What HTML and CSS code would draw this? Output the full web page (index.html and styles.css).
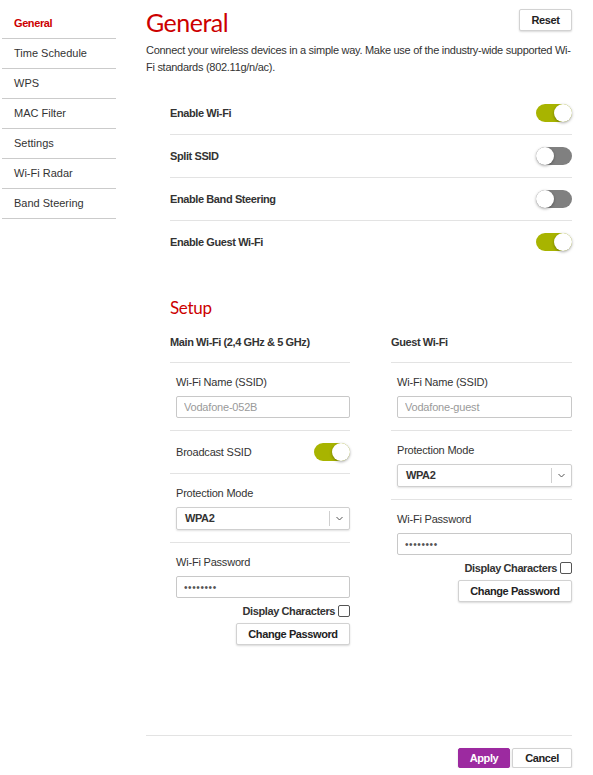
FILE: index.html
```html
<!DOCTYPE html>
<html lang="en">
<head>
    <meta charset="UTF-8">
    <meta name="viewport" content="width=device-width, initial-scale=1.0">
    <title>Wi-Fi General</title>
    <link rel="stylesheet" href="styles.css">
</head>
<body>
<div class="page">
    <nav class="sidebar">
        <a class="nav-item active" href="#">General</a>
        <a class="nav-item" href="#">Time Schedule</a>
        <a class="nav-item" href="#">WPS</a>
        <a class="nav-item" href="#">MAC Filter</a>
        <a class="nav-item" href="#">Settings</a>
        <a class="nav-item" href="#">Wi-Fi Radar</a>
        <a class="nav-item" href="#">Band Steering</a>
    </nav>

    <main class="content">
        <div class="head">
            <h1>General</h1>
            <button class="btn reset">Reset</button>
        </div>
        <p class="intro">Connect your wireless devices in a simple way. Make use of the industry-wide supported Wi-Fi standards (802.11g/n/ac).</p>

        <div class="switches">
            <div class="switch-row"><span>Enable Wi-Fi</span><span class="toggle on"></span></div>
            <div class="switch-row"><span>Split SSID</span><span class="toggle"></span></div>
            <div class="switch-row"><span>Enable Band Steering</span><span class="toggle"></span></div>
            <div class="switch-row"><span>Enable Guest Wi-Fi</span><span class="toggle on"></span></div>
        </div>

        <h2>Setup</h2>
        <div class="setup">
            <section class="col">
                <h3 class="col-head">Main Wi-Fi (2,4 GHz &amp; 5 GHz)</h3>
                <div class="field">
                    <label>Wi-Fi Name (SSID)</label>
                    <input class="text-input" type="text" placeholder="Vodafone-052B">
                </div>
                <div class="field-inline">
                    <span>Broadcast SSID</span><span class="toggle on"></span>
                </div>
                <div class="field">
                    <label>Protection Mode</label>
                    <div class="select">
                        <span class="select-value">WPA2</span>
                        <span class="select-arrow"><svg width="7" height="5" viewBox="0 0 7 5"><path d="M0.5 1 L3.5 4 L6.5 1" fill="none" stroke="#555" stroke-width="1"/></svg></span>
                    </div>
                </div>
                <div class="field last">
                    <label>Wi-Fi Password</label>
                    <input class="text-input pass" type="password" value="12345678">
                    <div class="show-row"><span>Display Characters</span><span class="check"></span></div>
                    <div class="btn-row"><button class="btn wide">Change Password</button></div>
                </div>
            </section>

            <section class="col">
                <h3 class="col-head">Guest Wi-Fi</h3>
                <div class="field">
                    <label>Wi-Fi Name (SSID)</label>
                    <input class="text-input" type="text" placeholder="Vodafone-guest">
                </div>
                <div class="field">
                    <label>Protection Mode</label>
                    <div class="select">
                        <span class="select-value">WPA2</span>
                        <span class="select-arrow"><svg width="7" height="5" viewBox="0 0 7 5"><path d="M0.5 1 L3.5 4 L6.5 1" fill="none" stroke="#555" stroke-width="1"/></svg></span>
                    </div>
                </div>
                <div class="field last">
                    <label>Wi-Fi Password</label>
                    <input class="text-input pass" type="password" value="12345678">
                    <div class="show-row"><span>Display Characters</span><span class="check"></span></div>
                    <div class="btn-row"><button class="btn wide">Change Password</button></div>
                </div>
            </section>
        </div>

        <div class="footer">
            <button class="btn apply">Apply</button>
            <button class="btn cancel">Cancel</button>
        </div>
    </main>
</div>
</body>
</html>
```

FILE: styles.css
```css
* {
    box-sizing: border-box;
}
body {
    margin: 0;
    font-family: "Liberation Sans", Arial, sans-serif;
    font-size: 11px;
    letter-spacing: -0.2px;
    color: #333;
    background: #fff;
}
b, .nav-item.active, .switch-row, .col-head, .show-row, .btn, .select-value {
    letter-spacing: -0.4px;
}
.page {
    display: flex;
    align-items: flex-start;
}

/* left menu */
.sidebar {
    width: 114px;
    margin: 9px 0 0 2px;
}
.nav-item {
    display: block;
    height: 30px;
    line-height: 29px;
    padding-left: 12px;
    border-bottom: 1px solid #cbcbcb;
    color: #333;
    letter-spacing: 0;
    text-decoration: none;
}
.nav-item.active {
    color: #cc0000;
    font-weight: bold;
}

/* main area */
.content {
    width: 426px;
    margin-left: 30px;
}
.head {
    display: flex;
    justify-content: space-between;
    align-items: flex-start;
    padding-top: 9px;
    height: 31px;
}
h1 {
    margin: 0;
    padding-top: 2px;
    font-family: Lato, "Liberation Sans", sans-serif;
    font-weight: normal;
    font-size: 25px;
    line-height: 22px;
    letter-spacing: -0.5px;
    color: #cc0000;
}
.intro {
    margin: 11px 0 0;
    line-height: 17px;
    letter-spacing: -0.28px;
}

.btn {
    font-family: "Liberation Sans", Arial, sans-serif;
    font-size: 11px;
    font-weight: bold;
    color: #222;
    background: #fff;
    border: 1px solid #d2d2d2;
    border-radius: 2px;
    box-shadow: 0 1px 2px rgba(0, 0, 0, 0.15);
    padding: 0;
    cursor: pointer;
}
.reset {
    width: 53px;
    height: 22px;
}

/* on/off rows */
.switches {
    margin: 16px 0 0 24px;
}
.switch-row {
    display: flex;
    justify-content: space-between;
    align-items: center;
    height: 43px;
    border-bottom: 1px solid #e3e3e3;
    font-weight: bold;
}
.switch-row:last-child {
    border-bottom: none;
    height: 42px;
}
.toggle {
    position: relative;
    width: 36px;
    height: 18px;
    border-radius: 9px;
    background: #808080;
}
.toggle::after {
    content: "";
    position: absolute;
    top: 0;
    left: 0;
    width: 18px;
    height: 18px;
    border-radius: 50%;
    background: #fff;
    box-shadow: 0 1px 3px rgba(0, 0, 0, 0.35);
}
.toggle.on {
    background: #a8b400;
}
.toggle.on::after {
    left: 18px;
}

/* setup */
h2 {
    margin: 35px 0 0 24px;
    font-family: Lato, "Liberation Sans", sans-serif;
    font-weight: normal;
    font-size: 17px;
    line-height: 20px;
    letter-spacing: -0.3px;
    color: #cc0000;
}
.setup {
    display: grid;
    grid-template-columns: 180px 181px;
    column-gap: 41px;
    margin: 4px 0 0 24px;
}
.col-head {
    display: flex;
    align-items: center;
    height: 41px;
    margin: 0;
    font-size: 11px;
    font-weight: bold;
    border-bottom: 1px solid #e3e3e3;
}
.field {
    padding: 12px 0 12px 6px;
    border-bottom: 1px solid #e3e3e3;
}
.field.last {
    padding-bottom: 0;
    border-bottom: none;
}
.field label {
    display: block;
    line-height: 14px;
    margin-bottom: 7px;
}
.field-inline {
    display: flex;
    justify-content: space-between;
    align-items: center;
    height: 43px;
    padding-left: 6px;
    border-bottom: 1px solid #e3e3e3;
}
.text-input {
    display: block;
    width: 100%;
    height: 22px;
    padding: 0 7px;
    border: 1px solid #c8c8c8;
    border-radius: 2px;
    font-family: "Liberation Sans", Arial, sans-serif;
    font-size: 11px;
    letter-spacing: -0.2px;
    color: #333;
    outline: none;
}
.text-input::placeholder {
    color: #9a9a9a;
}
.text-input.pass {
    font-size: 10px;
    letter-spacing: 0.6px;
    color: #555;
}
.select {
    display: flex;
    height: 23px;
    border: 1px solid #cfcfcf;
    border-radius: 2px;
    box-shadow: 0 1px 2px rgba(0, 0, 0, 0.12);
}
.select-value {
    flex: 1;
    padding-left: 8px;
    line-height: 21px;
    font-weight: bold;
}
.select-arrow {
    display: flex;
    align-items: center;
    justify-content: center;
    width: 20px;
    margin: 3px 0;
    border-left: 1px solid #cfcfcf;
}
.show-row {
    display: flex;
    justify-content: flex-end;
    align-items: center;
    gap: 3px;
    height: 14px;
    margin-top: 6px;
    font-weight: bold;
}
.check {
    width: 12px;
    height: 12px;
    border: 1px solid #555;
    border-radius: 2px;
}
.btn-row {
    display: flex;
    justify-content: flex-end;
    margin-top: 5px;
}
.wide {
    width: 114px;
    height: 22px;
}

/* bottom actions */
.footer {
    display: flex;
    justify-content: flex-end;
    gap: 2px;
    margin-top: 90px;
    padding-top: 12px;
    border-top: 1px solid #e3e3e3;
}
.apply {
    width: 52px;
    height: 20px;
    background: #9c2aa0;
    border-color: #9c2aa0;
    color: #fff;
}
.cancel {
    width: 60px;
    height: 20px;
}
```
